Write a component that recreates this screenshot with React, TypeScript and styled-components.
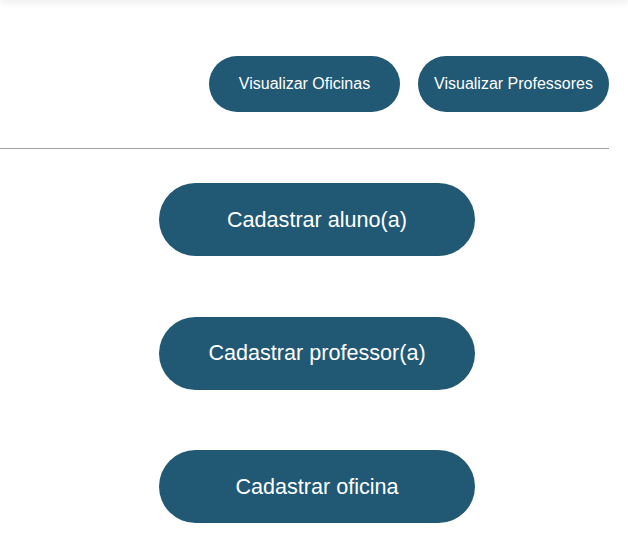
import React from "react";
import styled, { createGlobalStyle } from "styled-components";

const Global = createGlobalStyle`
  html, body { margin: 0; padding: 0; background: #fff; }
  body { font-family: "Liberation Sans", Arial, sans-serif; }
`;

const TopBar = styled.header`
  height: 1px;
  margin-top: -1px;
  position: relative;
  box-shadow: 0 1px 6px rgba(0, 0, 0, 0.4);
`;

const Nav = styled.nav`
  display: flex;
  justify-content: flex-end;
  gap: 18px;
  padding: 56px 19px 36px 0;
`;

const NavButton = styled.button`
  width: 191px;
  height: 56px;
  border: none;
  border-radius: 28px;
  background: #215873;
  color: #fff;
  font-family: "Liberation Sans", Arial, sans-serif;
  font-size: 16px;
  cursor: pointer;
`;

const Divider = styled.hr`
  margin: 0 19px 0 0;
  border: none;
  border-top: 1px solid #a0a0a0;
`;

const Actions = styled.main`
  display: flex;
  flex-direction: column;
  align-items: center;
  gap: 60.5px;
  padding: 34px 0 0 6px;
`;

const ActionButton = styled.button`
  width: 316px;
  height: 73px;
  border: none;
  border-radius: 37px;
  background: #215873;
  color: #fff;
  font-family: "Liberation Sans", Arial, sans-serif;
  font-size: 21.6px;
  cursor: pointer;
`;

export default function App() {
  return (
    <>
      <Global />
      <TopBar />
      <Nav>
        <NavButton>Visualizar Oficinas</NavButton>
        <NavButton>Visualizar Professores</NavButton>
      </Nav>
      <Divider />
      <Actions>
        <ActionButton>Cadastrar aluno(a)</ActionButton>
        <ActionButton>Cadastrar professor(a)</ActionButton>
        <ActionButton>Cadastrar oficina</ActionButton>
      </Actions>
    </>
  );
}
